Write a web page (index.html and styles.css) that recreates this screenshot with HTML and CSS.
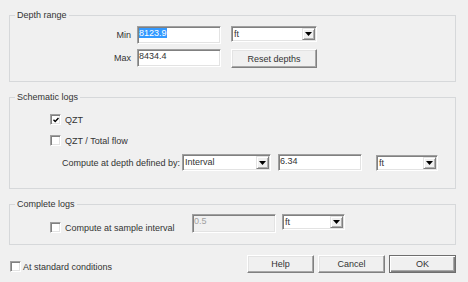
FILE: index.html
```html
<!DOCTYPE html>
<html lang="en">
<head>
  <meta charset="UTF-8">
  <title>Log options</title>
  <link rel="stylesheet" href="styles.css">
</head>
<body>
  <div class="dialog">

    <!-- Depth range -->
    <fieldset class="group group-depth">
      <legend>Depth range</legend>
      <div class="row">
        <span class="depth-label">Min</span>
        <div class="edit depth-edit"><span class="selected">8123.9</span></div>
        <div class="combo depth-unit">
          <span class="combo-text">ft</span>
          <span class="combo-btn"><svg width="7" height="4" viewBox="0 0 7 4"><polygon points="0,0 7,0 3.5,4"/></svg></span>
        </div>
      </div>
      <div class="row row-max">
        <span class="depth-label">Max</span>
        <div class="edit depth-edit">8434.4</div>
        <button class="btn reset-btn">Reset depths</button>
      </div>
    </fieldset>

    <!-- Schematic logs -->
    <fieldset class="group group-schematic">
      <legend>Schematic logs</legend>
      <label class="check-row">
        <span class="check"><svg width="6" height="6" viewBox="0 0 6 6"><path d="M0.5 2.8 L2.2 4.5 L5.5 1" fill="none" stroke="#000" stroke-width="1.4"/></svg></span>
        <span>QZT</span>
      </label>
      <label class="check-row check-row-2">
        <span class="check"></span>
        <span>QZT / Total flow</span>
      </label>
      <div class="row compute-row">
        <span class="compute-label">Compute at depth defined by:</span>
        <div class="combo interval-combo">
          <span class="combo-text">Interval</span>
          <span class="combo-btn"><svg width="7" height="4" viewBox="0 0 7 4"><polygon points="0,0 7,0 3.5,4"/></svg></span>
        </div>
        <div class="edit step-edit">6.34</div>
        <div class="combo step-unit">
          <span class="combo-text">ft</span>
          <span class="combo-btn"><svg width="7" height="4" viewBox="0 0 7 4"><polygon points="0,0 7,0 3.5,4"/></svg></span>
        </div>
      </div>
    </fieldset>

    <!-- Complete logs -->
    <fieldset class="group group-complete">
      <legend>Complete logs</legend>
      <div class="row sample-row">
        <label class="sample-label">
          <span class="check"></span>
          <span>Compute at sample interval</span>
        </label>
        <div class="edit edit-disabled sample-edit">0.5</div>
        <div class="combo sample-unit">
          <span class="combo-text">ft</span>
          <span class="combo-btn"><svg width="7" height="4" viewBox="0 0 7 4"><polygon points="0,0 7,0 3.5,4"/></svg></span>
        </div>
      </div>
    </fieldset>

    <div class="footer">
      <label class="footer-check">
        <span class="check"></span>
        <span>At standard conditions</span>
      </label>
      <div class="buttons">
        <button class="btn">Help</button>
        <button class="btn">Cancel</button>
        <button class="btn btn-default">OK</button>
      </div>
    </div>

  </div>
</body>
</html>
```

FILE: styles.css
```css
* {
  box-sizing: border-box;
}

body {
  margin: 0;
  background-color: #f0f0f0;
  font-family: "Liberation Sans", Arial, sans-serif;
  font-size: 9px;
  color: #333;
}

.dialog {
  padding: 9px 12px 0 9px;
}

/* group boxes */

.group {
  margin: 0;
  padding: 0;
  min-width: 0;
  border: 1px solid #d6d8da;
}

.group + .group {
  margin-top: 9px;
}

.group legend {
  margin-left: 5px;
  padding: 0 2px;
  line-height: 13px;
}

.row {
  display: flex;
  align-items: flex-start;
}

/* classic 3d controls */

.edit {
  background-color: #fff;
  border: 1px solid;
  border-color: #a0a0a0 #fff #fff #a0a0a0;
  box-shadow: inset 1px 1px 0 #808080, inset -1px -1px 0 #e3e3e3;
  padding: 1px 2px 0 1px;
  line-height: 11px;
  white-space: nowrap;
  overflow: hidden;
}

.edit-disabled {
  background-color: #f0f0f0;
  color: #a0a0a0;
}

.selected {
  background-color: #3399ff;
  color: #fff;
}

.combo {
  display: flex;
  background-color: #fff;
  border: 1px solid;
  border-color: #a0a0a0 #fff #fff #a0a0a0;
  box-shadow: inset 1px 1px 0 #808080, inset -1px -1px 0 #e3e3e3;
  padding: 1px 1px 1px 2px;
}

.combo-text {
  flex: 1;
  line-height: 12px;
}

.combo-btn {
  width: 13px;
  display: flex;
  align-items: center;
  justify-content: center;
  background-color: #f0f0f0;
  border: 1px solid;
  border-color: #e3e3e3 #808080 #808080 #e3e3e3;
  box-shadow: inset 1px 1px 0 #fff, inset -1px -1px 0 #b0b0b0;
}

.combo-btn svg {
  display: block;
  fill: #000;
}

.btn {
  font: inherit;
  color: inherit;
  background-color: #f0f0f0;
  border: 1px solid;
  border-color: #fff #808080 #808080 #fff;
  box-shadow: inset -1px -1px 0 #a8a8a8, inset 1px 1px 0 #e3e3e3;
  padding: 0;
}

.btn-default {
  border-color: #6e6e6e;
  box-shadow: inset 1px 1px 0 #fff, inset -1px -1px 0 #808080, inset -2px -2px 0 #a8a8a8;
}

.check {
  flex: none;
  width: 11px;
  height: 11px;
  display: flex;
  align-items: center;
  justify-content: center;
  background-color: #fff;
  border: 1px solid;
  border-color: #a0a0a0 #fff #fff #a0a0a0;
  box-shadow: inset 1px 1px 0 #808080, inset -1px -1px 0 #e3e3e3;
}

.check svg {
  display: block;
}

/* depth range */

.group-depth {
  padding: 4px 0 13px;
}

.depth-label {
  width: 121px;
  margin-right: 6px;
  text-align: right;
  line-height: 18px;
}

.depth-edit {
  width: 84px;
  height: 18px;
  margin-right: 10px;
}

.depth-unit {
  width: 86px;
  height: 16px;
}

.row-max {
  margin-top: 5px;
}

.reset-btn {
  width: 86px;
  height: 19px;
}

/* schematic logs */

.group-schematic {
  padding: 9px 0 17px;
}

.check-row {
  display: flex;
  align-items: center;
  gap: 4px;
  height: 13px;
  padding-left: 40px;
}

.check-row-2 {
  margin-top: 8px;
}

.compute-row {
  align-items: center;
  margin-top: 7px;
  padding-left: 52px;
}

.compute-label {
  width: 120px;
}

.interval-combo {
  width: 89px;
  height: 17px;
  margin-right: 7px;
}

.step-edit {
  width: 84px;
  height: 17px;
  margin-right: 14px;
}

.step-unit {
  width: 62px;
  height: 16px;
}

/* complete logs */

.group-complete {
  padding: 3px 0 10px;
}

.sample-row {
  padding-left: 40px;
}

.sample-label {
  width: 142px;
  display: flex;
  align-items: center;
  gap: 4px;
  height: 13px;
  margin-top: 7px;
}

.sample-edit {
  width: 84px;
  height: 19px;
  margin-right: 6px;
}

.sample-unit {
  width: 63px;
  height: 16px;
}

/* footer */

.footer {
  display: flex;
  align-items: flex-start;
  margin-top: 10px;
  padding-left: 1px;
}

.footer-check {
  display: flex;
  align-items: center;
  gap: 2px;
  height: 13px;
  margin-top: 5px;
}

.buttons {
  display: flex;
  gap: 4px;
  margin-left: auto;
}

.buttons .btn {
  width: 67px;
  height: 18px;
}
```
